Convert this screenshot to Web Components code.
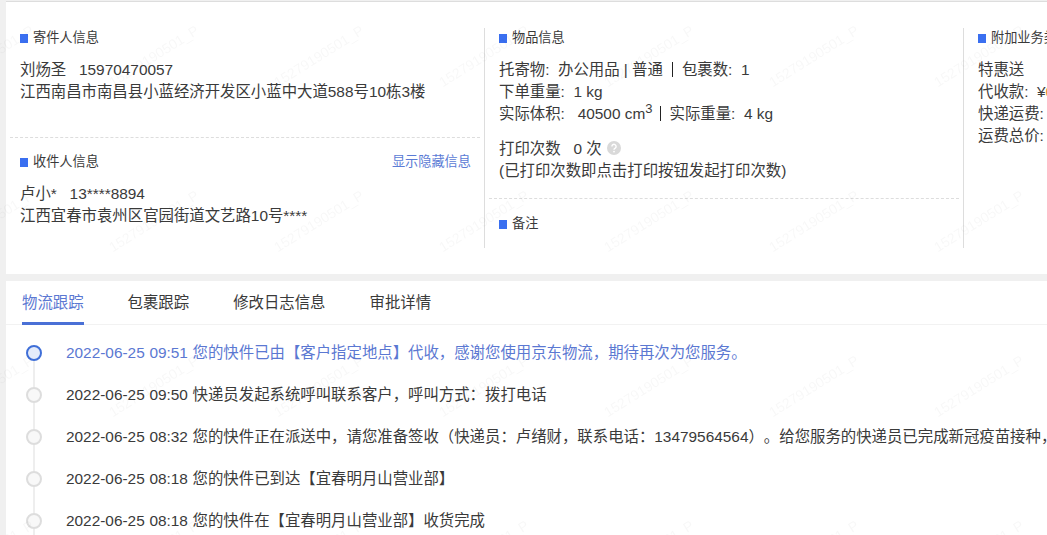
<!DOCTYPE html>
<html lang="zh">
<head>
<meta charset="utf-8">
<title>运单详情</title>
<style>
  html, body { height: 100%; }
  body {
    margin: 0;
    overflow: hidden;
    background: #f0f0f0;
    color: #3a3a3a;
    font: 15.4px/22px "Liberation Sans", "Noto Sans CJK SC", sans-serif;
    text-spacing-trim: space-all;
  }
  #page { display: flex; flex-direction: column; height: 100%; padding-left: 6px; }
  .row-gap { margin-top: 13px; }
  .orange { color: #e8893a; }
  sup { font-size: 13px; line-height: 0; }
</style>
</head>
<body>
<div id="page">
  <info-panel>
    <info-column>
      <info-section heading="寄件人信息" dashed style="height:110px">
        <div>刘炀圣&nbsp;&nbsp;&nbsp;15970470057</div>
        <div>江西南昌市南昌县小蓝经济开发区小蓝中大道588号10栋3楼</div>
      </info-section>
      <info-section heading="收件人信息" action="显示隐藏信息">
        <div>卢小*&nbsp;&nbsp;&nbsp;13****8894</div>
        <div>江西宜春市袁州区官园街道文艺路10号****</div>
      </info-section>
    </info-column>
    <info-column>
      <info-section heading="物品信息" dashed style="height:171px">
        <div>托寄物:&nbsp;&nbsp;办公用品 | 普通<v-bar></v-bar>包裹数:&nbsp;&nbsp;1</div>
        <div>下单重量:&nbsp;&nbsp;1 kg</div>
        <div>实际体积:&nbsp;&nbsp;&nbsp;40500 cm<sup>3</sup><v-bar narrow></v-bar>实际重量:&nbsp;&nbsp;4 kg</div>
        <div class="row-gap">打印次数&nbsp;&nbsp;&nbsp;0 次 <help-icon></help-icon></div>
        <div>(已打印次数即点击打印按钮发起打印次数)</div>
      </info-section>
      <info-section heading="备注" style="padding-top:15px"></info-section>
    </info-column>
    <info-column last>
      <info-section heading="附加业务类">
        <div>特惠送</div>
        <div>代收款:&nbsp;&nbsp;¥<span class="orange">0.00</span></div>
        <div>快递运费:&nbsp;&nbsp;¥0.00</div>
        <div>运费总价:&nbsp;&nbsp;¥0.00</div>
      </info-section>
    </info-column>
  </info-panel>

  <track-card>
    <tab-bar slot="tabs">
      <tab-item active>物流跟踪</tab-item>
      <tab-item>包裹跟踪</tab-item>
      <tab-item>修改日志信息</tab-item>
      <tab-item>审批详情</tab-item>
    </tab-bar>
    <track-item active first>2022-06-25 09:51 您的快件已由【客户指定地点】代收，感谢您使用京东物流，期待再次为您服务。</track-item>
    <track-item>2022-06-25 09:50 快递员发起系统呼叫联系客户，呼叫方式：拨打电话</track-item>
    <track-item>2022-06-25 08:32 您的快件正在派送中，请您准备签收（快递员：卢绪财，联系电话：13479564564）。给您服务的快递员已完成新冠疫苗接种，</track-item>
    <track-item>2022-06-25 08:18 您的快件已到达【宜春明月山营业部】</track-item>
    <track-item>2022-06-25 08:18 您的快件在【宜春明月山营业部】收货完成</track-item>
  </track-card>
</div>
<water-mark text="15279190501_P"></water-mark>

<script>
(global => {
  'use strict';

  class InfoPanel extends HTMLElement {
    constructor() {
      super();
      this.attachShadow({ mode: 'open' }).innerHTML = `
  <style>
  :host {
    display: flex;
    flex: none;
    width: 1500px;
    padding: 26px 0 26px;
    background: #fff;
    border-top: 1px solid #ddd;
    margin-top: 1px;
  }
  </style>
  <slot></slot>`;
    }
  }

  class InfoColumn extends HTMLElement {
    constructor() {
      super();
      this.attachShadow({ mode: 'open' }).innerHTML = `
  <style>
  :host {
    display: block;
    box-sizing: border-box;
    width: 479px;
    height: 220px;
    padding: 0 4px;
    border-right: 1px solid #ddd;
    flex: none;
  }
  :host([last]) { border-right: 0; width: 520px; }
  </style>
  <slot></slot>`;
    }
  }

  class InfoSection extends HTMLElement {
    constructor() {
      super();
      const root = this.attachShadow({ mode: 'open' });
      root.innerHTML = `
  <style>
  :host {
    display: block;
    box-sizing: border-box;
    padding: 0 10px;
  }
  :host([dashed]) { border-bottom: 1px dashed #ddd; }
  .head {
    display: flex;
    align-items: center;
    height: 20px;
    margin-bottom: 11px;
    font-size: 13.2px;
  }
  .mark {
    width: 8px;
    height: 9px;
    margin-right: 5px;
    background: #3a6ff0;
    flex: none;
  }
  .action {
    margin-left: auto;
    margin-right: -1px;
    color: #5b7bd5;
  }
  .action:empty { display: none; }
  .body { white-space: nowrap; }
  </style>
  <div class="head"><span class="mark"></span><span class="label"></span><span class="action"></span></div>
  <div class="body"><slot></slot></div>`;
      this.$label = root.querySelector('.label');
      this.$action = root.querySelector('.action');
    }

    connectedCallback() {
      this.$label.textContent = this.getAttribute('heading') || '';
      this.$action.textContent = this.getAttribute('action') || '';
      // 点線の次のセクションは少し下げる
      const prev = this.previousElementSibling;
      if (prev && prev.hasAttribute('dashed') && !this.style.paddingTop) this.style.paddingTop = '14px';
    }
  }

  class VBar extends HTMLElement {
    constructor() {
      super();
      this.attachShadow({ mode: 'open' }).innerHTML = `
  <style>
  :host {
    display: inline-block;
    width: 1px;
    height: 15px;
    margin: 0 9px;
    background: #222;
    vertical-align: -2px;
  }
  :host([narrow]) { margin: 0 9px 0 7px; }
  </style>`;
    }
  }

  class HelpIcon extends HTMLElement {
    constructor() {
      super();
      this.attachShadow({ mode: 'open' }).innerHTML = `
  <style>
  :host { display: inline-block; width: 14px; height: 14px; margin-left: 1px; vertical-align: -1px; }
  svg { display: block; }
  </style>
  <svg width="14" height="14" viewBox="0 0 14 14">
    <circle cx="7" cy="7" r="7" fill="#d9d9d9"/>
    <path d="M4.9 5.4a2.1 2.1 0 1 1 3.3 1.7c-.8.5-1.2.9-1.2 1.7" fill="none" stroke="#fff" stroke-width="1.4"/>
    <circle cx="7" cy="10.6" r=".9" fill="#fff"/>
  </svg>`;
    }
  }

  class TrackCard extends HTMLElement {
    constructor() {
      super();
      this.attachShadow({ mode: 'open' }).innerHTML = `
  <style>
  :host {
    display: block;
    flex: 1;
    margin-top: 7px;
    background: #fff;
  }
  .list { padding-top: 7px; }
  </style>
  <slot name="tabs"></slot>
  <div class="list"><slot></slot></div>`;
    }
  }

  class TabBar extends HTMLElement {
    constructor() {
      super();
      this.attachShadow({ mode: 'open' }).innerHTML = `
  <style>
  :host {
    display: flex;
    gap: 44px;
    height: 43px;
    padding-left: 16px;
    border-bottom: 1px solid #f2f2f2;
  }
  </style>
  <slot></slot>`;
    }
  }

  class TabItem extends HTMLElement {
    constructor() {
      super();
      this.attachShadow({ mode: 'open' }).innerHTML = `
  <style>
  :host {
    display: block;
    box-sizing: border-box;
    height: 44px;
    padding-top: 11px;
    border-bottom: 3px solid transparent;
  }
  :host([active]) {
    color: #5b78d2;
    border-bottom-color: #4a70d6;
  }
  </style>
  <slot></slot>`;
    }
  }

  class TrackItem extends HTMLElement {
    constructor() {
      super();
      this.attachShadow({ mode: 'open' }).innerHTML = `
  <style>
  :host {
    display: flex;
    align-items: stretch;
    height: 42px;
    padding-left: 20px;
  }
  :host([active]) { color: #5b78d2; }
  .rail {
    display: flex;
    flex-direction: column;
    align-items: center;
    flex: none;
    width: 16px;
    margin-right: 24px;
  }
  .rail i { flex: 1; width: 2px; background: #eee; }
  :host([first]) .rail i:first-child { visibility: hidden; }
  .dot {
    box-sizing: border-box;
    width: 16px;
    height: 16px;
    flex: none;
    border: 2px solid #ddd;
    border-radius: 50%;
    background: #f8f8f8;
  }
  :host([active]) .dot {
    border-color: #3f6fd8;
    background: #e4ebfa;
  }
  .text { align-self: center; white-space: nowrap; word-spacing: .4px; }
  </style>
  <div class="rail"><i></i><span class="dot"></span><i></i></div>
  <div class="text"><slot></slot></div>`;
    }
  }

  // 透かしは全面に重ねるタイル
  class WaterMark extends HTMLElement {
    constructor() {
      super();
      this.attachShadow({ mode: 'open' }).innerHTML = `
  <style>
  :host {
    position: fixed;
    top: -27px;
    left: -94px;
    pointer-events: none;
  }
  .grid {
    display: grid;
    grid-template-columns: repeat(9, 165px);
    grid-auto-rows: 165px;
  }
  .grid span {
    display: flex;
    align-items: center;
    justify-content: center;
    font: 14px "Liberation Sans", sans-serif;
    color: rgba(0, 0, 0, .03);
    transform: rotate(-32deg);
    white-space: nowrap;
  }
  </style>
  <div class="grid"></div>`;
    }

    connectedCallback() {
      const grid = this.shadowRoot.querySelector('.grid');
      const text = this.getAttribute('text');
      for (let i = 0; i < 36; i++) {
        const cell = document.createElement('span');
        cell.textContent = text;
        grid.appendChild(cell);
      }
    }
  }

  customElements.define('info-panel', InfoPanel);
  customElements.define('info-column', InfoColumn);
  customElements.define('info-section', InfoSection);
  customElements.define('v-bar', VBar);
  customElements.define('help-icon', HelpIcon);
  customElements.define('track-card', TrackCard);
  customElements.define('tab-bar', TabBar);
  customElements.define('tab-item', TabItem);
  customElements.define('track-item', TrackItem);
  customElements.define('water-mark', WaterMark);
})(this);
</script>
</body>
</html>
